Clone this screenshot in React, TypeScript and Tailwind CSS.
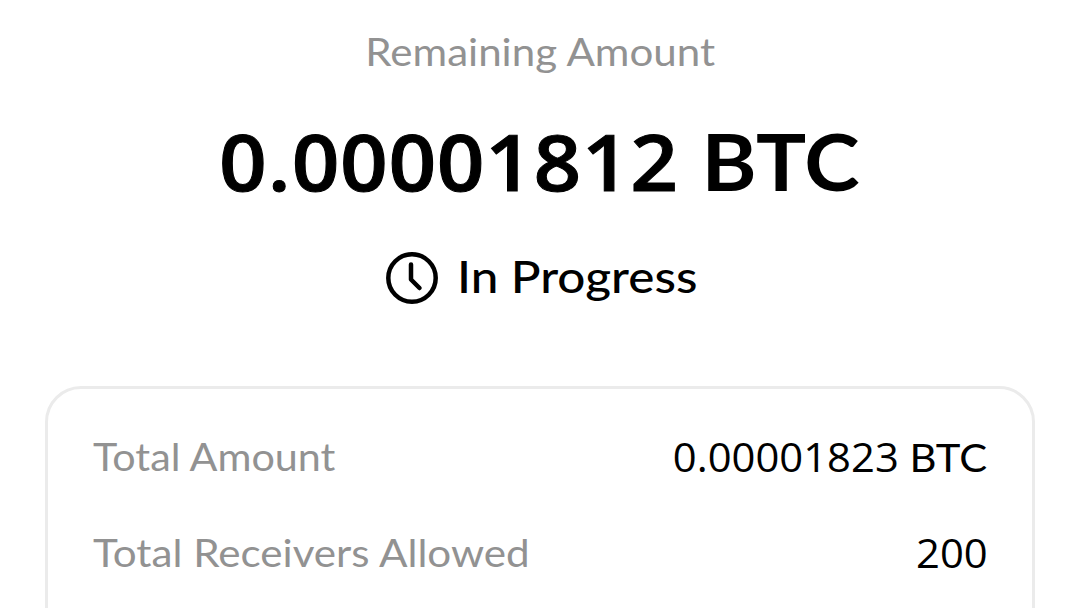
export default function App() {
  return (
    <main className="flex h-[608px] w-[1080px] flex-col items-center overflow-hidden bg-white font-['Lato',sans-serif] text-black">
      <p className="mt-[27px] scale-x-[1.065] text-[39.5px] leading-[48px] text-[#929292]">Remaining Amount</p>
      <h1 className="mt-9 flex scale-x-[1.07] gap-[21.5px] text-[79px] leading-[100px] font-bold whitespace-nowrap">
        <span className="font-['Open_Sans',sans-serif] text-[78px] font-semibold tracking-[0.6px] [-webkit-text-stroke:1px_black]">
          <span className="tracking-[1px]">0.</span>00001812
        </span>
        <span className="origin-left scale-x-[0.99]">BTC</span>
      </h1>
      <div className="mt-[39px] flex h-[60px] w-[308px] items-center gap-[19px]">
        <svg className="size-[52px]" viewBox="0 0 52 52" fill="none" stroke="currentColor" strokeWidth="4.5" strokeLinecap="round" strokeLinejoin="round">
          <circle cx="26" cy="26" r="23.7" />
          <path d="M25 12.5v15l8.5 8.5" />
        </svg>
        <span className="-mt-1 origin-left scale-x-[1.11] text-[44.5px] leading-[60px] font-medium whitespace-nowrap">In Progress</span>
      </div>
      <section className="mt-[80px] h-[300px] w-[990px] shrink-0 rounded-[36px] border-[3px] border-[#ebebeb] px-[45px] pt-11 text-[39.5px] leading-[48px]">
        <div className="flex justify-between">
          <span className="-mt-px origin-left scale-x-[1.045] text-[#929292]">Total Amount</span>
          <span className="flex origin-right scale-x-[1.058] gap-[10px]">
            <span className="font-['Open_Sans',sans-serif]">0.00001823</span>
            <span>BTC</span>
          </span>
        </div>
        <div className="mt-12 flex justify-between">
          <span className="-mt-px origin-left scale-x-[1.068] text-[#929292]">Total Receivers Allowed</span>
          <span className="-mr-px origin-right scale-x-[1.058] font-['Open_Sans',sans-serif]">200</span>
        </div>
      </section>
    </main>
  );
}
